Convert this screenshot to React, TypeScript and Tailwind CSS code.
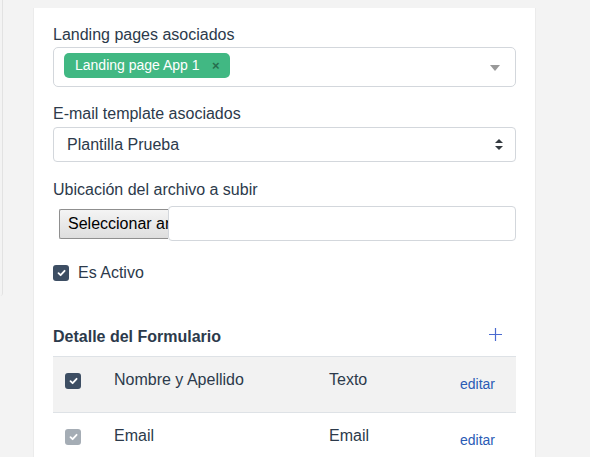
import React from "react";

function Check({ bg }: { bg: string }) {
  return (
    <div className={`w-4 h-4 rounded-[3px] flex items-center justify-center ${bg}`}>
      <svg width="9" height="8" viewBox="0 0 9 8">
        <path d="M1.5 4.2 L3.6 6.2 L7.6 1.8" fill="none" stroke="white" strokeWidth="1.8" strokeLinecap="round" strokeLinejoin="round" />
      </svg>
    </div>
  );
}

function Row({ name, type, bg, cb }: { name: string; type: string; bg: string; cb: string }) {
  return (
    <div className={`flex items-start h-[56px] border-t border-[#dee2e6] pt-[11px] ${bg}`}>
      <div className="w-[61px] pl-[12px] mt-[5px] shrink-0">
        <Check bg={cb} />
      </div>
      <div className="w-[215px] leading-6 text-[16px] shrink-0">{name}</div>
      <div className="w-[131px] leading-6 text-[16px] shrink-0">{type}</div>
      <div className="leading-6 text-[14px] mt-[4px] text-[#2a5bb5]">editar</div>
    </div>
  );
}

export default function App() {
  return (
    <div className="min-h-screen w-full bg-[#f3f3f3] flex items-start font-['Liberation_Sans',Arial,sans-serif] text-[#2c3a4b] overflow-hidden">
      <div className="w-[3px] h-[296px] border-r border-[#e2e2e2] rounded-br-[3px] shrink-0" />
      <div className="ml-[30px] mt-[8px] w-[503px] h-[449px] bg-white border-x border-[#ebebeb] pl-[19px] pr-[19px] pt-[15px] shrink-0">
        <div className="h-6 leading-6 text-[16px]">Landing pages asociados</div>
        <div className="relative h-[40px] border border-[#d3d7dc] rounded-[5px] flex items-center pl-[10px]">
          <div className="relative h-[25px] bg-[#41b883] rounded-[5px] text-white text-[14px] leading-[25px] pl-[11px] pr-[30px] mt-[-3px]">
            Landing page App 1
            <span className="absolute right-[10px] top-0 text-[#266d4d] font-bold text-[13px]">×</span>
          </div>
          <div className="absolute right-[15px] top-[17px] w-0 h-0 border-l-[5px] border-r-[5px] border-t-[6px] border-l-transparent border-r-transparent border-t-[#999]" />
        </div>

        <div className="mt-[15px] h-6 leading-6 text-[16px]">E-mail template asociados</div>
        <div className="mt-px h-[35px] border border-[#d3d7dc] rounded-[4px] flex items-center justify-between pl-[13px] pr-[12px]">
          <span className="text-[16px]">Plantilla Prueba</span>
          <svg width="8" height="11" viewBox="0 0 4 5.5">
            <path d="M2 0L0 2h4zm0 5.5L0 3.5h4z" fill="#343a40" />
          </svg>
        </div>

        <div className="mt-[16px] h-6 leading-6 text-[16px]">Ubicación del archivo a subir</div>
        <div className="mt-[4px] flex items-center h-[35px]">
          <div className="ml-[6px] w-[109px] h-[30px] shrink-0 overflow-hidden whitespace-nowrap border border-[#8f8f8f] border-r-0 rounded-l-[2px] bg-gradient-to-b from-[#f4f4f4] to-[#dedede] text-black text-[16px] leading-[28px] pl-[8px]">
            Seleccionar archivo
          </div>
          <div className="flex-1 h-[35px] border border-[#d3d7dc] rounded-[4px] bg-white" />
        </div>

        <div className="mt-[20px] h-6 flex items-center gap-[9px]">
          <Check bg="bg-[#3d4e63]" />
          <span className="text-[16px] leading-6">Es Activo</span>
        </div>

        <div className="mt-[40px] h-6 flex items-start justify-between">
          <span className="font-bold text-[16px] leading-6">Detalle del Formulario</span>
          <svg className="mt-[3px] mr-[14px]" width="13" height="13" viewBox="0 0 13 13">
            <path d="M6.5 0 V13 M0 6.5 H13" stroke="#4a6ad0" strokeWidth="1.2" />
          </svg>
        </div>

        <div className="mt-[7px]">
          <Row name="Nombre y Apellido" type="Texto" bg="bg-[#f2f2f2]" cb="bg-[#3d4e63]" />
          <Row name="Email" type="Email" bg="bg-white" cb="bg-[#a5adb5]" />
        </div>
      </div>
    </div>
  );
}
